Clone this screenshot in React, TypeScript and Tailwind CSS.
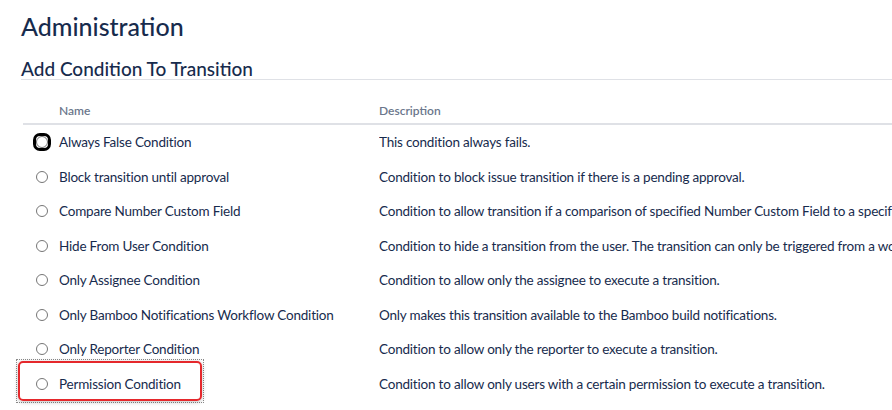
import React from "react";

const rows = [
  ["Always False Condition", "This condition always fails."],
  ["Block transition until approval", "Condition to block issue transition if there is a pending approval."],
  [
    "Compare Number Custom Field",
    "Condition to allow transition if a comparison of specified Number Custom Field to a specified value is true.",
  ],
  [
    "Hide From User Condition",
    "Condition to hide a transition from the user. The transition can only be triggered from a workflow function or service.",
  ],
  ["Only Assignee Condition", "Condition to allow only the assignee to execute a transition."],
  ["Only Bamboo Notifications Workflow Condition", "Only makes this transition available to the Bamboo build notifications."],
  ["Only Reporter Condition", "Condition to allow only the reporter to execute a transition."],
  ["Permission Condition", "Condition to allow only users with a certain permission to execute a transition."],
];

function Radio({ focused }: { focused?: boolean }) {
  return (
    <span
      className={
        focused
          ? "flex h-[18px] w-[18px] items-center justify-center rounded-[7px] border-[3px] border-black"
          : "flex h-[18px] w-[18px] items-center justify-center"
      }
    >
      <span className="block h-[12px] w-[12px] rounded-full border border-[#767676] bg-white" />
    </span>
  );
}

export default function App() {
  return (
    <div
      className="h-[410px] w-[892px] overflow-hidden bg-white pl-[21px] text-[#172b4d]"
      style={{ fontFamily: 'Lato, "Noto Sans", sans-serif' }}
    >
      <h1 className="pt-[11px] text-[25px] leading-[30px] font-medium">Administration</h1>
      <h2 className="mt-[17px] border-b border-[#dfe1e6] text-[19px] leading-[21px] font-medium">
        Add Condition To Transition
      </h2>

      <div className="ml-[2px] mt-[19px]">
        <div className="flex h-[26px] items-center border-b-2 border-[#dfe1e6] text-[12px] font-semibold text-[#6b778c]">
          <div className="w-[356px] shrink-0 pl-[36px]">Name</div>
          <div>Description</div>
        </div>
        {rows.map(([name, desc], i) => (
          <div
            key={name}
            className="relative flex h-[34.5px] items-center whitespace-nowrap text-[13.5px] tracking-[-0.2px]"
          >
            {i === 7 && (
              <div className="pointer-events-none absolute left-[-7px] top-[-8px] h-[44px] w-[188px] border border-dotted border-[#8a8a8a]">
                <div className="absolute left-[1px] top-[1px] h-[40px] w-[184px] rounded-[5px] border-2 border-[#e5282c] shadow-[0_1px_4px_rgba(0,0,0,0.25)]" />
              </div>
            )}
            <div className="flex w-[356px] shrink-0 items-center">
              <div className="flex w-[36px] shrink-0 justify-center pl-[1px]">
                <Radio focused={i === 0} />
              </div>
              <span>{name}</span>
            </div>
            <div className="overflow-hidden">{desc}</div>
          </div>
        ))}
      </div>
    </div>
  );
}
